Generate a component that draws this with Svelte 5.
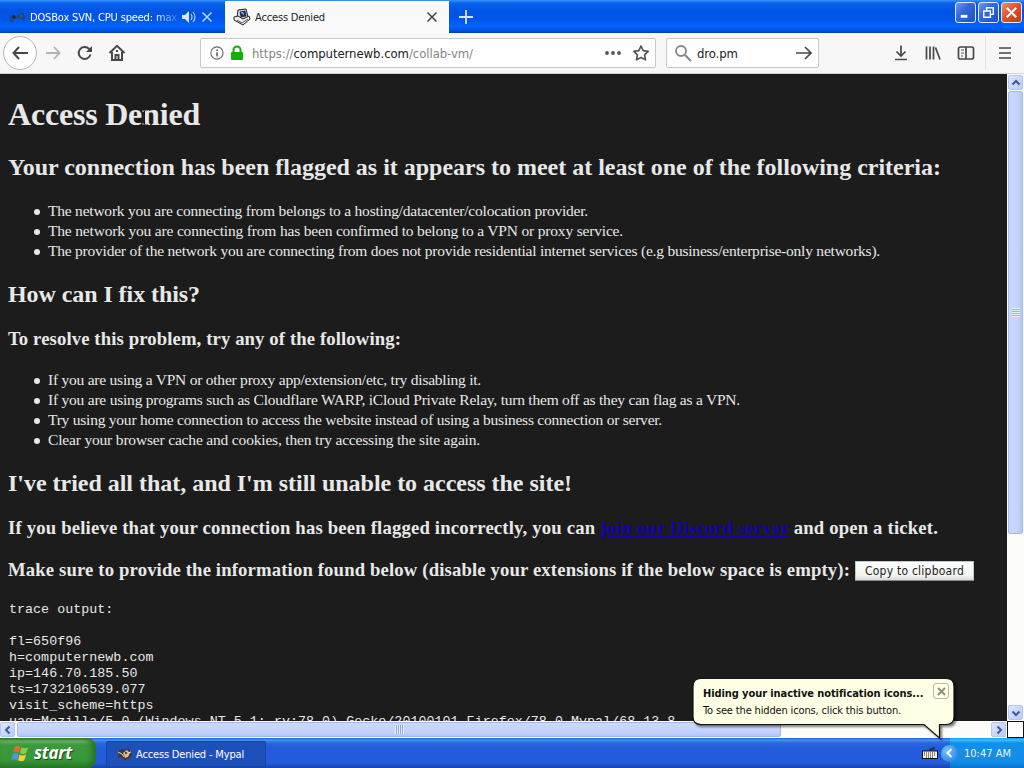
<script lang="ts">
	let tabs = $state([
		{ title: 'DOSBox SVN, CPU speed: max', active: false, audio: true },
		{ title: 'Access Denied', active: true, audio: false }
	]);
	let search = $state('dro.pm');
	let showBalloon = $state(true);

	const reasons = [
		{ text: 'The network you are connecting from belongs to a hosting/datacenter/colocation provider.', width: 540 },
		{ text: 'The network you are connecting from has been confirmed to belong to a VPN or proxy service.', width: 575 },
		{ text: 'The provider of the network you are connecting from does not provide residential internet services (e.g business/enterprise-only networks).', width: 832 }
	];

	const fixes = [
		{ text: 'If you are using a VPN or other proxy app/extension/etc, try disabling it.', width: 433 },
		{ text: 'If you are using programs such as Cloudflare WARP, iCloud Private Relay, turn them off as they can flag as a VPN.', width: 692 },
		{ text: 'Try using your home connection to access the website instead of using a business connection or server.', width: 614 },
		{ text: 'Clear your browser cache and cookies, then try accessing the site again.', width: 432 }
	];

	const trace = `trace output:

fl=650f96
h=computernewb.com
ip=146.70.185.50
ts=1732106539.077
visit_scheme=https
uag=Mozilla/5.0 (Windows NT 5.1; rv:78.0) Gecko/20100101 Firefox/78.0 Mypal/68.13.8`;

	// spread the letters of a line so that it takes the given width
	function fit(node: HTMLElement, width: number) {
		const natural = node.getBoundingClientRect().width;
		const count = (node.textContent ?? '').length;
		node.style.letterSpacing = `${(width - natural) / count}px`;
	}
</script>

<div class="screen">
	<header class="tabstrip">
		{#each tabs as tab}
			<div class="tab" class:active={tab.active}>
				{#if tab.active}
					<svg class="favicon" viewBox="0 0 18 18" width="18" height="18">
						<path d="M5 2l8-1 2 8-6 3-5-3z" fill="#d8d8d4" stroke="#222" />
						<path d="M7 4l5-1 1 5-5 1z" fill="#1b2e83" stroke="#111" stroke-width=".7" />
						<path d="M8 5l2-.4.4 2" stroke="#b6d5ff" fill="none" />
						<path d="M1 9l4-1 5 3 6-3 1 3-7 6-9-5z" fill="#eee" stroke="#222" />
						<path d="M4 12l5 3 6-4" stroke="#555" fill="none" />
					</svg>
				{:else}
					<svg class="favicon" viewBox="0 0 18 18" width="18" height="18">
						<path d="M2 14c-1-5 1-8 4-7l3 1 5-3c3 0 4 6 2 8l-4-3-5 1-3 3z" fill="#24477c" />
						<path d="M4 9h4M6 7v4" stroke="#172b50" stroke-width="1.5" />
						<circle cx="13" cy="8" r="1.2" fill="#435d72" />
					</svg>
				{/if}
				<span class="tab-title"><span use:fit={tab.active ? 70 : 147}>{tab.title}</span></span>
				{#if tab.audio}
					<svg class="audio" viewBox="0 0 16 14" width="16" height="14">
						<path d="M1 5h3l4-4v12L4 9H1z" fill="#d8eaff" />
						<path d="M10 4q2 3 0 6M12 2q4 5 0 10" fill="none" stroke="#a8d0ff" stroke-width="1.2" />
					</svg>
				{/if}
				<button class="tab-close" aria-label="Close tab">
					<svg viewBox="0 0 12 12" width="12" height="12"><path d="M1.500 1.500l9 9M10.500 1.500l-9 9" stroke="currentColor" stroke-width="1.500" /></svg>
				</button>
			</div>
		{/each}
		<button class="new-tab" aria-label="New tab">
			<svg viewBox="0 0 16 16" width="16" height="16"><path d="M8 1v14M1 8h14" stroke="#d4e6ff" stroke-width="1.8" /></svg>
		</button>
		<div class="window-buttons">
			<button aria-label="Minimize"><svg viewBox="0 0 20 20"><path d="M5 14h7" stroke="#fff" stroke-width="3" /></svg></button>
			<button aria-label="Restore"><svg viewBox="0 0 20 20"><path d="M8 8V5h7v7h-3M5 8.500h7v6.500H5z" fill="none" stroke="#fff" stroke-width="1.500" /></svg></button>
			<button class="close" aria-label="Close"><svg viewBox="0 0 20 20"><path d="M5 5l10 10M15 5L5 15" stroke="#fff" stroke-width="2.200" /></svg></button>
		</div>
	</header>

	<nav class="toolbar">
		<button class="back" aria-label="Back">
			<svg viewBox="0 0 18 18" width="18" height="18"><path d="M17 9H2.500M8 3L2.500 9 8 15" class="line" /></svg>
		</button>
		<button class="forward" aria-label="Forward">
			<svg viewBox="0 0 18 18" width="18" height="18"><path d="M2 9h13.500M10 3l5.500 6-5.500 6" class="line thin" /></svg>
		</button>
		<button class="reload" aria-label="Reload">
			<svg viewBox="0 0 18 18" width="18" height="18">
				<path d="M14.500 10.500A6 6 0 1 1 13 4.800L15 6.500" class="line" />
				<path d="M16 2v6h-6z" fill="#484848" />
			</svg>
		</button>
		<button class="home" aria-label="Home">
			<svg viewBox="0 0 18 18" width="18" height="18">
				<path d="M1.500 9L9 1.800 16.500 9M4 8v8h10V8" class="line" />
				<path d="M7.500 16v-5h3v5" class="line" stroke-width="1.500" />
				<path d="M9 6v2" class="line" />
			</svg>
		</button>

		<div class="urlbar">
			<svg viewBox="0 0 16 16" width="14" height="14">
				<circle cx="8" cy="8" r="7" fill="none" stroke="#666" stroke-width="1.200" />
				<path d="M8 7v5M8 4v1.800" stroke="#555" stroke-width="1.700" />
			</svg>
			<svg class="lock" viewBox="0 0 14 16" width="14" height="16">
				<path d="M3.500 8V5a3.500 3.500 0 0 1 7 0v3" fill="none" stroke="#12b000" stroke-width="2" />
				<rect x="1" y="7" width="12" height="8" rx="1" fill="#12b000" />
			</svg>
			<span class="url"><span use:fit={221}>https://<b>computernewb.com</b>/collab-vm/</span></span>
			<svg class="dots" viewBox="0 0 18 6" width="18" height="6">
				<circle cx="3" cy="3" r="1.900" fill="#555" /><circle cx="9" cy="3" r="1.900" fill="#555" /><circle cx="15" cy="3" r="1.900" fill="#555" />
			</svg>
			<svg class="star" viewBox="0 0 18 18" width="18" height="18">
				<path d="M9 2l2.200 4.600 5 .7-3.600 3.500.9 5L9 13.400l-4.500 2.400.9-5L1.800 7.300l5-.7z" fill="none" stroke="#555" stroke-width="1.700" stroke-linejoin="round" />
			</svg>
		</div>

		<div class="searchbar">
			<svg viewBox="0 0 18 18" width="18" height="18">
				<circle cx="7" cy="7" r="5" fill="none" stroke="#858585" stroke-width="1.800" />
				<path d="M11 11l6 6" stroke="#858585" stroke-width="2" />
			</svg>
			<input bind:value={search} aria-label="Search" />
			<svg viewBox="0 0 18 18" width="18" height="18"><path d="M1 9h15M10 3l6 6-6 6" class="line small" /></svg>
		</div>

		<div class="tools">
			<svg viewBox="0 0 16 18" width="16" height="18"><path d="M8 1.500V12M3.500 7.500L8 12l4.500-4.500M2 15.500h12" class="line small" /></svg>
			<svg viewBox="0 0 16 18" width="16" height="18"><path d="M1.500 2.500v13M5 2.500v13M8.500 2.500v13M10.500 3.500l4.500 12" class="line small" /></svg>
			<svg viewBox="0 0 18 18" width="18" height="18">
				<rect x="1.500" y="3" width="15" height="12" rx="1.800" class="line small" />
				<path d="M9 3v12" class="line small" />
				<path d="M4 6h3M4 9h3M4 12h2" stroke="#555" />
			</svg>
		</div>
		<svg class="menu" viewBox="0 0 14 14" width="14" height="14"><path d="M1 2h12M1 7h12M1 12h12" class="line small" /></svg>
	</nav>

	<div class="viewport">
		<main class="page">
			<h1><span use:fit={192}>Access Denied</span></h1>
			<h2><span use:fit={933}>Your connection has been flagged as it appears to meet at least one of the following criteria:</span></h2>
			<ul>
				{#each reasons as item}
					<li><span use:fit={item.width}>{item.text}</span></li>
				{/each}
			</ul>
			<h2><span use:fit={192}>How can I fix this?</span></h2>
			<h3><span use:fit={393}>To resolve this problem, try any of the following:</span></h3>
			<ul>
				{#each fixes as item}
					<li><span use:fit={item.width}>{item.text}</span></li>
				{/each}
			</ul>
			<h2><span use:fit={564}>I've tried all that, and I'm still unable to access the site!</span></h2>
			<h3><span use:fit={930}>If you believe that your connection has been flagged incorrectly, you can <a href="#discord">join our Discord server</a> and open a ticket.</span></h3>
			<h3>
				<span use:fit={842}>Make sure to provide the information found below (disable your extensions if the below space is empty):</span>
				<button class="copy"><span use:fit={99}>Copy to clipboard</span></button>
			</h3>
			<pre>{trace}</pre>
			<svg class="ibeam" viewBox="0 0 9 17" width="9" height="17">
				<path d="M1 1h2.500l1 1 1-1H8M4.500 2v13M1 16h2.500l1-1 1 1H8" fill="none" stroke="#151515" />
				<path d="M2 2h1.500M5.500 2H7M2 15h1.500M5.500 15H7" stroke="#aaa" />
			</svg>
		</main>
		<div class="scroll-y">
			<div class="arrow"><svg viewBox="0 0 10 10"><path d="M1.500 6.500L5 3l3.500 3.500" /></svg></div>
			<div class="thumb"><i></i></div>
			<div class="track"></div>
			<div class="arrow"><svg viewBox="0 0 10 10"><path d="M1.500 3.500L5 7l3.500-3.500" /></svg></div>
		</div>
	</div>

	<div class="scroll-x">
		<div class="arrow"><svg viewBox="0 0 10 10"><path d="M6.500 1.500L3 5l3.500 3.500" /></svg></div>
		<div class="thumb"><i></i></div>
		<div class="track"></div>
		<div class="arrow"><svg viewBox="0 0 10 10"><path d="M3.500 1.500L7 5 3.500 8.500" /></svg></div>
		<div class="corner"></div>
	</div>

	<footer class="taskbar">
		<button class="start">
			<svg viewBox="0 0 20 20" width="19" height="19">
				<path d="M4 3q3-2 6 0L8.500 9q-3-2-6 0z" fill="#ef6534" />
				<path d="M11 3.500q3 2 7 0L16 9.500q-3 2-6.500 0z" fill="#8dcc45" />
				<path d="M2 10.500q3-2 6 0L6.500 17q-3-2-6 0z" fill="#5b91ee" />
				<path d="M9 11q3 2 7 0l-2 6q-3 2-6.500 0z" fill="#f9cf3b" />
			</svg>
			<span use:fit={38}>start</span>
		</button>
		<button class="task">
			<svg viewBox="0 0 16 14" width="16" height="14">
				<path d="M1 4l4-2 3 2 4-3 1 4 2 2-2 4-5 2-4-3-3 1 1-3z" fill="#493329" />
				<path d="M6 6l4-3 3 3-2 4-3 1z" fill="#d8b98d" />
				<path d="M1 5l4 2 2 3M11 6l3-1" stroke="#e9d8be" fill="none" />
				<circle cx="9" cy="6" r="1" fill="#17202c" />
			</svg>
			<span use:fit={108}>Access Denied - Mypal</span>
		</button>
		<svg class="keyboard" viewBox="0 0 16 12" width="16" height="12">
			<path d="M8 4V2h4V0" fill="none" stroke="#111" />
			<rect x=".5" y="4" width="15" height="7.500" fill="#f4f1df" stroke="#111" />
			<path d="M2 6h12M2 8h12M4 10h8" stroke="#222" stroke-dasharray="1 1" />
		</svg>
		<div class="tray">
			<button class="expand" aria-label="Show hidden icons">
				<svg viewBox="0 0 10 10" width="10" height="10"><path d="M6.500 1L2.500 5l4 4" fill="none" stroke="#fff" stroke-width="2" /></svg>
			</button>
			<span use:fit={47}>10:47 AM</span>
		</div>
	</footer>

	{#if showBalloon}
		<div class="balloon">
			<svg class="bubble" viewBox="0 0 266 66" width="266" height="66">
				<path d="M9 1.500H254q8 0 8 8v30q0 8-8 8H247.500V61L232 47.500H9q-8 0-8-8V9.500q0-8 8-8z" fill="#ffffe5" stroke="#111" stroke-width="1.200" />
			</svg>
			<strong><span use:fit={220}>Hiding your inactive notification icons...</span></strong>
			<p><span use:fit={198}>To see the hidden icons, click this button.</span></p>
			<button aria-label="Close" onclick={() => (showBalloon = false)}>
				<svg viewBox="0 0 9 9" width="9" height="9"><path d="M1 1l7 7M8 1L1 8" stroke="#8b8b80" stroke-width="1.800" /></svg>
			</button>
		</div>
	{/if}
</div>

<style>
	:global(body) {
		margin: 0;
	}

	.screen {
		position: relative;
		display: flex;
		flex-direction: column;
		width: 1024px;
		height: 768px;
		overflow: hidden;
		font-family: 'DejaVu Sans Condensed', 'DejaVu Sans', sans-serif;
		font-stretch: condensed;
		font-size: 11px;
	}

	button {
		display: flex;
		align-items: center;
		justify-content: center;
		box-sizing: border-box;
		padding: 0;
		border: 0;
		background: none;
		font: inherit;
	}

	svg {
		flex: none;
	}

	span {
		white-space: pre;
	}

	.line {
		fill: none;
		stroke: #484848;
		stroke-width: 2;
	}

	.line.small {
		stroke-width: 1.7;
	}

	.line.thin {
		stroke: #b2b2b4;
		stroke-width: 1.8;
	}

	.tabstrip {
		display: flex;
		flex: none;
		height: 33px;
		box-sizing: border-box;
		padding-top: 1px;
		background: linear-gradient(#3a94ff 0, #0863ed 3px, #0055e4 10px, #0055e8 18px, #0062ff 27px, #0050d9 31px, #003aae);
	}

	.tab {
		display: flex;
		align-items: center;
		width: 225px;
		box-sizing: border-box;
		padding: 0 12px 0 8px;
		color: #fff;
	}

	.tab.active {
		width: 224px;
		background: #f9f9fa;
		color: #222;
	}

	.favicon {
		margin-right: 4px;
	}

	.tab-title {
		flex: 1;
		overflow: hidden;
	}

	.tab:not(.active) .tab-title {
		mask-image: linear-gradient(to right, #000 125px, rgba(0, 0, 0, 0.15) 148px);
	}

	.audio {
		margin: 0 4px;
	}

	.tab-close {
		width: 12px;
		color: #b8d8ff;
	}

	.active .tab-close {
		color: #444;
		margin-right: -1px;
	}

	.new-tab {
		width: 34px;
	}

	.window-buttons {
		display: flex;
		gap: 2px;
		margin: 1px 2px 0 auto;
	}

	.window-buttons button {
		width: 21px;
		height: 21px;
		border: 1px solid #dcebff;
		border-radius: 3px;
		background: linear-gradient(135deg, #7397ef, #3568dc 40%, #1f50cc);
	}

	.window-buttons .close {
		background: linear-gradient(135deg, #f18b68, #de4f28 50%, #c9390f);
	}

	.toolbar {
		display: flex;
		align-items: center;
		flex: none;
		height: 41px;
		box-sizing: border-box;
		padding: 0 12px 0 3px;
		background: #f7f7f8;
		border-bottom: 1px solid #d0d0d2;
	}

	.back {
		width: 34px;
		height: 34px;
		border: 1px solid #b7b7b9;
		border-radius: 50%;
		background: #fdfdfd;
	}

	.forward {
		width: 32px;
	}

	.reload {
		width: 32px;
	}

	.home {
		width: 32px;
	}

	.urlbar,
	.searchbar {
		display: flex;
		align-items: center;
		height: 30px;
		box-sizing: border-box;
		border: 1px solid #c8c8ca;
		border-radius: 2px;
		background: #fff;
		font-size: 13px;
	}

	.urlbar {
		width: 456px;
		margin-left: 67px;
		padding: 0 5px 0 9px;
		color: #858585;
	}

	.lock {
		margin: 0 8px 0 6px;
	}

	.url {
		flex: 1;
	}

	.url b {
		font-weight: normal;
		color: #202020;
	}

	.dots {
		margin-right: 10px;
	}

	.searchbar {
		width: 153px;
		margin-left: 10px;
		padding: 0 5px 0 7px;
	}

	.searchbar input {
		flex: 1;
		min-width: 0;
		margin: 0 0 0 5px;
		padding: 0;
		border: 0;
		outline: 0;
		background: none;
		color: #222;
		font: inherit;
		letter-spacing: -0.1px;
	}

	.tools {
		display: flex;
		align-items: center;
		gap: 16px;
		height: 34px;
		margin-left: auto;
		padding-right: 10px;
		border-right: 1px solid #e2e2e2;
	}

	.menu {
		margin-left: 12px;
	}

	.viewport {
		display: flex;
		flex: 1;
		min-height: 0;
		background: #1c1c1c;
	}

	.page {
		position: relative;
		flex: 1;
		min-width: 0;
		padding: 0 8px;
		overflow: hidden;
		color: #e8e8e8;
		font-family: 'Liberation Serif', 'Times New Roman', serif;
		font-size: 15.5px;
	}

	h1 {
		margin: 22px 0 21px;
		font-size: 32px;
		line-height: 37px;
	}

	h2 {
		margin: 20px 0;
		font-size: 24px;
		line-height: 27px;
	}

	h3 {
		display: flex;
		align-items: center;
		height: 22px;
		margin: 20px 0 19px;
		font-size: 18.72px;
		line-height: 22px;
	}

	ul {
		margin: 0;
		padding-left: 26px;
		line-height: 20px;
		list-style: none;
	}

	h3 + ul {
		margin-top: 20px;
	}

	li {
		display: flex;
		align-items: center;
	}

	li::before {
		content: '';
		width: 6px;
		height: 6px;
		margin: 1px 8px 0 0;
		border-radius: 50%;
		background: #e8e8e8;
	}

	a {
		color: #1600b0;
		text-decoration-thickness: 2px;
	}

	.copy {
		width: 119px;
		height: 20px;
		margin: 2px 0 0 5px;
		border: 1px solid #b9cacb;
		border-bottom-color: #7c8c8e;
		border-radius: 1px;
		background: linear-gradient(#fff, #f2f2ef 75%, #dadadd);
		color: #222;
		font: 12px 'DejaVu Sans Condensed', 'DejaVu Sans', sans-serif;
	}

	pre {
		margin: 21px 0 0;
		padding-left: 1px;
		font: 13.333px/16px 'Liberation Mono', 'Courier New', monospace;
		letter-spacing: 0.03px;
	}

	.ibeam {
		position: absolute;
		left: 140px;
		top: 35px;
	}

	.scroll-y {
		display: flex;
		flex-direction: column;
		width: 17px;
		box-sizing: border-box;
		padding: 1px;
		background: #fcfcf8;
	}

	.arrow {
		display: flex;
		align-items: center;
		justify-content: center;
		flex: none;
		width: 15px;
		height: 15px;
		box-sizing: border-box;
		border: 1px solid #b4c5ef;
		border-radius: 2px;
		background: linear-gradient(135deg, #dce6ff, #b8cafa);
	}

	.arrow svg {
		width: 10px;
		height: 10px;
		fill: none;
		stroke: #42598f;
		stroke-width: 2;
	}

	.thumb {
		display: flex;
		align-items: center;
		justify-content: center;
		box-sizing: border-box;
		border: 1px solid #a4b9ea;
		border-radius: 2px;
	}

	.scroll-y .thumb {
		height: 443px;
		margin-top: 1px;
		background: linear-gradient(to right, #cbd9ff, #c3d2fd 70%, #b3c5f5);
	}

	.scroll-y .thumb i {
		width: 8px;
		height: 9px;
		background: repeating-linear-gradient(#eef4ff 0 1px, #8cb0f4 1px 2px);
	}

	.track {
		flex: 1;
	}

	.scroll-x {
		display: flex;
		flex: none;
		height: 17px;
		box-sizing: border-box;
		padding: 1px 0;
		background: #fcfcf8;
	}

	.scroll-x .thumb {
		width: 764px;
		margin-left: 2px;
		background: linear-gradient(#cbd9ff, #c3d2fd 70%, #b3c5f5);
	}

	.scroll-x .thumb i {
		width: 9px;
		height: 9px;
		background: repeating-linear-gradient(to right, #eef4ff 0 1px, #8ca6e4 1px 2px);
	}

	.corner {
		width: 17px;
		height: 17px;
		box-sizing: border-box;
		margin: -1px 0 -1px 1px;
		border: 1px solid #111;
		background: #fff;
	}

	.taskbar {
		display: flex;
		align-items: center;
		flex: none;
		height: 30px;
		background: linear-gradient(#245edb 0, #4295ef 2px, #2768dd 5px, #245bdc 10px, #245bdb 25px, #1941a5);
		color: #fff;
	}

	.start {
		justify-content: flex-start;
		width: 96px;
		height: 30px;
		padding-left: 11px;
		border-radius: 0 9px 9px 0;
		background: linear-gradient(#2c7e2c, #69ba69 3px, #3c993c 7px, #389838 22px, #287b28);
		box-shadow: inset -4px 0 6px #276f27;
		color: #fff;
		font: italic bold 17px 'Open Sans', sans-serif;
		text-shadow: 1px 1px 1px #174817;
	}

	.start svg {
		margin-right: 4px;
	}

	.start span {
		margin-top: -2px;
	}

	.task {
		justify-content: flex-start;
		width: 160px;
		height: 26px;
		margin: 2px 0 0 10px;
		padding-left: 10px;
		border: 1px solid #1646a9;
		border-radius: 2px;
		background: #1e50ba;
		color: #fff;
	}

	.task svg {
		margin-right: 3px;
	}

	.keyboard {
		margin: 0 12px 0 auto;
	}

	.tray {
		display: flex;
		align-items: center;
		width: 74px;
		height: 30px;
		background: linear-gradient(#139ee9 0, #3bc0fa 2px, #1290e8 5px, #0f8dea 24px, #0b72c9);
		color: #e8f6ff;
	}

	.expand {
		width: 17px;
		height: 17px;
		margin: 0 6px 0 -9px;
		border-radius: 50%;
		background: radial-gradient(circle at 35% 35%, #6ec7ff, #1d73d7);
	}

	/* tray balloon, pointing at the expand button */
	.balloon {
		position: absolute;
		left: 692px;
		top: 677px;
		width: 252px;
		height: 47px;
		box-sizing: border-box;
		padding: 8px 0 0 11px;
		color: #111;
	}

	.balloon .bubble {
		position: absolute;
		left: 0;
		top: 0;
		filter: drop-shadow(2px 2px 1px rgba(0, 0, 0, 0.5));
	}

	.balloon strong,
	.balloon p {
		position: relative;
		display: block;
		margin: 0;
		line-height: 17px;
	}

	.balloon button {
		position: absolute;
		right: -5px;
		top: 6px;
		width: 16px;
		height: 16px;
		border: 1px solid #b9b9ae;
		border-radius: 3px;
	}
</style>
